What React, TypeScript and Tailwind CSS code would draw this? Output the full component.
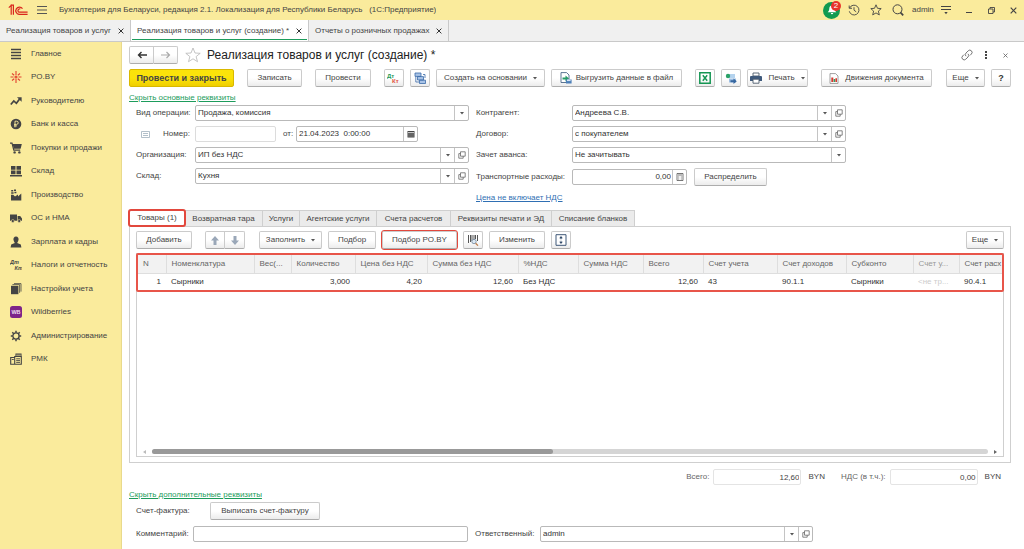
import type { ReactNode } from "react";
import clsx from "clsx";

const sections: { title: string; icon: ReactNode }[] = [
  { title: "Главное", icon: <path d="M1 1.5h10M1 4.5h10M1 7.5h10M1 10.5h10" stroke="currentColor" strokeWidth="1.6" /> },
  {
    title: "PO.BY",
    icon: (
      <g stroke="#e2402f" strokeWidth="1.1" fill="none">
        <path d="M6 0v4M6 8v4M0.5 6h3M8.5 6h3M2 2.5l2.2 1.7M10 2.5L7.8 4.2M2 9.5l2.2-1.7M10 9.5L7.8 7.8" />
        <circle cx="6" cy="6" r="1" />
      </g>
    ),
  },
  {
    title: "Руководителю",
    icon: (
      <>
        <path d="M0.8 9.5l3-3.6 2.6 2.4L9.6 4" fill="none" stroke="currentColor" strokeWidth="1.7" />
        <path d="M7 2.2h4.6v4.6z" fill="currentColor" />
      </>
    ),
  },
  {
    title: "Банк и касса",
    icon: (
      <>
        <circle cx="6" cy="6" r="5.3" fill="currentColor" />
        <path d="M5 9.3V3.2h1.6a1.5 1.5 0 010 3.2H4M4 7.9h3" fill="none" stroke="#faeb9c" strokeWidth="0.9" />
      </>
    ),
  },
  {
    title: "Покупки и продажи",
    icon: (
      <>
        <path d="M0 1.2h2l1.8 7h6.4" fill="none" stroke="currentColor" strokeWidth="1.2" />
        <path d="M2.6 2h9.2l-1.2 4.8H3.8z" fill="currentColor" />
        <circle cx="4.6" cy="10.4" r="1.2" fill="currentColor" />
        <circle cx="9.4" cy="10.4" r="1.2" fill="currentColor" />
      </>
    ),
  },
  { title: "Склад", icon: <path d="M1 1h4.5v3.8H1zM6.5 1H11v3.8H6.5zM1 5.6h4.5v3.6H1zM6.5 5.6H11v3.6H6.5zM0 10h12v1.4H0z" fill="currentColor" /> },
  { title: "Производство", icon: <path d="M1 11.5V5.8h2.2L5 7.4l3-2v2l3.3-3v7.1zM1.2 1h2v1.4h-2zM4 0.6h2V2H4zM1.2 3.2h2.4v1.6H1.2zM4.4 2.8h2v1.4h-2z" fill="currentColor" /> },
  {
    title: "ОС и НМА",
    icon: (
      <>
        <path d="M0 2.4h7v6.4H0zM7.6 4h2.6L12 6.4v2.4H7.6z" fill="currentColor" />
        <circle cx="2.8" cy="9" r="1.5" fill="currentColor" stroke="#faeb9c" strokeWidth="0.5" />
        <circle cx="9.2" cy="9" r="1.5" fill="currentColor" stroke="#faeb9c" strokeWidth="0.5" />
      </>
    ),
  },
  { title: "Зарплата и кадры", icon: <path d="M6 0.6a2.6 2.6 0 012.4 3.6C8 5.6 7.4 6.3 7.2 7l3.6 1.6.6 2.8H.6l.6-2.8L4.8 7c-.2-.7-.8-1.4-1.2-2.8A2.6 2.6 0 016 .6z" fill="currentColor" /> },
  {
    title: "Налоги и отчетность",
    icon: (
      <g fill="currentColor" fontSize="5.5" fontWeight="bold" fontStyle="italic">
        <text x="0" y="5">Дт</text>
        <text x="4.5" y="11">Кт</text>
      </g>
    ),
  },
  {
    title: "Настройки учета",
    icon: (
      <>
        <path d="M1 2.8h7.4v8.4H1z" fill="currentColor" />
        <path d="M2.4 1.6h7.2v8.2M4 0.6h7v8" fill="none" stroke="currentColor" strokeWidth="0.8" />
      </>
    ),
  },
  {
    title: "Wildberries",
    icon: (
      <>
        <rect width="12" height="12" rx="2.5" fill="#7d2489" />
        <text x="6" y="7.8" fontSize="5.5" fontWeight="bold" fill="#eddcf0" textAnchor="middle">WB</text>
      </>
    ),
  },
  {
    title: "Администрирование",
    icon: (
      <g stroke="currentColor" fill="none">
        <circle cx="6" cy="6" r="3.1" strokeWidth="1.3" />
        <path d="M6 0.8v2M6 9.2v2M0.8 6h2M9.2 6h2M2.3 2.3l1.4 1.4M8.3 8.3l1.4 1.4M2.3 9.7l1.4-1.4M8.3 3.7l1.4-1.4" strokeWidth="1.5" />
      </g>
    ),
  },
  {
    title: "РМК",
    icon: (
      <g stroke="currentColor" fill="none">
        <path d="M0.7 4.5h4v6.8h-4zM4.7 3.5h6.6v7.8H4.7zM6 3.5V1h5v2.5" strokeWidth="1.1" />
        <path d="M6.2 5.8h3.8M6.2 7.6h3.8M6.2 9.4h3.8M1.8 6.5h2M7 2h3" strokeWidth="0.9" />
      </g>
    ),
  },
];

const docTabs = [
  { title: "Реализация товаров и услуг", width: "w-[131px]", active: false },
  { title: "Реализация товаров и услуг (создание) *", width: "w-[178px]", active: true },
  { title: "Отчеты о розничных продажах", width: "w-[140px]", active: false },
];

const pages = [
  { title: "Товары (1)", width: "w-[56px]" },
  { title: "Возвратная тара", width: "w-[78px]" },
  { title: "Услуги", width: "w-[37px]" },
  { title: "Агентские услуги", width: "w-[77px]" },
  { title: "Счета расчетов", width: "w-[74px]" },
  { title: "Реквизиты печати и ЭД", width: "w-[101px]" },
  { title: "Списание бланков", width: "w-[83px]" },
];

const columns = [
  { title: "N", value: "1", width: "w-[28px]", num: true },
  { title: "Номенклатура", value: "Сырники", width: "w-[88px]" },
  { title: "Вес(...", value: "", width: "w-[37px]" },
  { title: "Количество", value: "3,000", width: "w-[64px]", num: true },
  { title: "Цена без НДС", value: "4,20", width: "w-[72px]", num: true },
  { title: "Сумма без НДС", value: "12,60", width: "w-[91px]", num: true },
  { title: "%НДС", value: "Без НДС", width: "w-[60px]" },
  { title: "Сумма НДС", value: "", width: "w-[65px]" },
  { title: "Всего", value: "12,60", width: "w-[60px]", num: true },
  { title: "Счет учета", value: "43", width: "w-[74px]" },
  { title: "Счет доходов", value: "90.1.1", width: "w-[69px]" },
  { title: "Субконто", value: "Сырники", width: "w-[67px]" },
  { title: "Счет у...", value: "<не тр...", width: "w-[46px]", muted: true },
  { title: "Счет расх", value: "90.4.1", width: "" },
];

function Button({ children, className, label }: { children: ReactNode; className?: string; label?: string }) {
  return (
    <button
      type="button"
      aria-label={label}
      className={clsx(
        "flex h-[18px] shrink-0 items-center justify-center rounded-xs border border-[#cbcbcb] border-b-[#adadad] bg-linear-to-b from-white from-50% to-[#ececec] whitespace-nowrap",
        className,
      )}
    >
      {children}
    </button>
  );
}

function Caret() {
  return (
    <svg viewBox="0 0 4 3" className="h-[3px] w-1" aria-hidden="true">
      <path d="M0 0h4L2 2.6z" fill="#555" />
    </svg>
  );
}

function OpenIcon() {
  return (
    <svg viewBox="0 0 8 8" className="size-2" fill="none" stroke="#666" strokeWidth="0.8" aria-hidden="true">
      <path d="M2.5 0.8h4.7v4.4H2.5zM2.5 2.6H0.8v4.6h4.4V5.2" />
    </svg>
  );
}

function CrossIcon({ className }: { className?: string }) {
  return (
    <svg viewBox="0 0 6 6" className={clsx("size-1.5", className)} stroke="currentColor" aria-hidden="true">
      <path d="M0.6 0.6l4.8 4.8M5.4 0.6L0.6 5.4" />
    </svg>
  );
}

function SelectField({ id, value, open }: { id: string; value: string; open?: boolean }) {
  return (
    <div className="flex h-4 min-w-0 flex-1 rounded-xs border border-[#b9b9b9] bg-white text-[#333]">
      <div className="relative min-w-0 flex-1">
        <select id={id} className="block h-full w-full appearance-none bg-transparent pl-0.5 outline-none">
          <option>{value}</option>
        </select>
        <span className="pointer-events-none absolute inset-y-0 right-0 flex w-3.5 items-center justify-center border-l border-[#c4c4c4]">
          <Caret />
        </span>
      </div>
      {open && (
        <button type="button" aria-label="Открыть" className="flex w-3.5 items-center justify-center border-l border-[#c4c4c4]">
          <OpenIcon />
        </button>
      )}
    </div>
  );
}

function Total({ id, label, value }: { id: string; label: string; value: string }) {
  return (
    <div className="flex items-center">
      <label htmlFor={id} className="mr-1 text-[#666]">{label}</label>
      <input id={id} readOnly defaultValue={value} className="mr-[7px] h-4 w-[88px] rounded-xs border border-[#e4e4e4] px-px text-right text-[#444] outline-none" />
      <span>BYN</span>
    </div>
  );
}

function Header() {
  return (
    <header className="flex h-5 items-center bg-[#faeb9c] pr-[7px] pl-2">
      <svg viewBox="0 0 20 12" className="h-3 w-5" fill="none" stroke="#d9261c" strokeWidth="1.2" role="img" aria-label="1С">
        <path d="M0.8 3.6L3.2 1.4v9.4M2.6 1.2h2.8v9.6" />
        <path d="M14.5 4.6A3.7 3.7 0 1011 10.4h8.6" />
        <path d="M12.4 5A1.7 1.7 0 1011 8.2h8.6" />
      </svg>
      <button type="button" aria-label="Меню" className="ml-[9px]">
        <svg viewBox="0 0 10 8" className="h-2 w-2.5" stroke="#555">
          <path d="M0 0.5h10M0 4h10M0 7.5h10" />
        </svg>
      </button>
      <p className="ml-3 truncate whitespace-pre">
        {"Бухгалтерия для Беларуси, редакция 2.1. Локализация для Республики Беларусь   (1С:Предприятие)"}
      </p>
      <div className="ml-auto flex shrink-0 items-center text-[#444]">
        <button type="button" aria-label="Уведомления" className="relative flex size-[17px] items-center justify-center rounded-full bg-[#119a50]">
          <svg viewBox="0 0 10 10" className="size-2.5" fill="#fff">
            <path d="M5 0.5c2 0 2.6 1.6 2.7 3.2.1 1.6.6 2.4 1.6 3.5H.7C1.7 6.1 2.2 5.3 2.3 3.7 2.4 2.1 3 .5 5 .5zM3.8 8h2.4a1.2 1.2 0 01-2.4 0z" />
          </svg>
          <span className="absolute -top-px -right-px flex size-2.5 items-center justify-center rounded-full bg-[#e8352b] text-white">2</span>
        </button>
        <button type="button" aria-label="История" className="ml-2">
          <svg viewBox="0 0 12 12" className="size-3" fill="none" stroke="currentColor" strokeWidth="0.9">
            <path d="M1.6 4A4.9 4.9 0 111.3 7.3M1.2 1.5v2.8H4M6 3.2v3l2.2 1.6" />
          </svg>
        </button>
        <button type="button" aria-label="Избранное" className="ml-2.5">
          <svg viewBox="0 0 12 12" className="size-3" fill="none" stroke="currentColor" strokeWidth="0.9">
            <path d="M6 0.8l1.5 3.5 3.7.3-2.8 2.5.9 3.8L6 8.9l-3.3 2 .9-3.8L.8 4.6l3.7-.3z" />
          </svg>
        </button>
        <button type="button" aria-label="Поиск" className="ml-2.5">
          <svg viewBox="0 0 12 12" className="size-3" fill="none" stroke="currentColor">
            <circle cx="5.5" cy="5.3" r="4.5" />
            <path d="M8.4 8.4l2.8 3" strokeWidth="1.7" />
          </svg>
        </button>
        <span className="ml-2 w-[21px]">admin</span>
        <button type="button" aria-label="Настройки" className="ml-2">
          <svg viewBox="0 0 10 10" className="size-2.5" stroke="currentColor" fill="currentColor">
            <path d="M0 1.5h10M0 4.5h10" fill="none" />
            <path d="M3.3 7h3.4L5 9.2z" stroke="none" />
          </svg>
        </button>
        <button type="button" aria-label="Свернуть" className="ml-[15px]">
          <svg viewBox="0 0 6 8" className="h-2 w-1.5" stroke="currentColor"><path d="M0 6.5h6" /></svg>
        </button>
        <button type="button" aria-label="Развернуть" className="ml-4">
          <svg viewBox="0 0 7 7" className="size-[7px]" fill="none" stroke="currentColor" strokeWidth="0.9">
            <path d="M0.5 2h4.5v4.5H.5zM2 2V.5h4.5V5H5" />
          </svg>
        </button>
        <button type="button" aria-label="Закрыть" className="ml-[15px]">
          <CrossIcon className="size-[7px]" />
        </button>
      </div>
    </header>
  );
}

function DocTabs() {
  return (
    <div className="flex h-[22px] border-b border-[#c9c9c9] bg-[#f0f0f0]">
      {docTabs.map((tab) => (
        <div
          key={tab.title}
          className={clsx(
            "relative flex shrink-0 items-center justify-between border-r border-[#c9c9c9] px-1.5",
            tab.width,
            tab.active && "bg-white",
          )}
        >
          <button type="button" className="whitespace-nowrap">{tab.title}</button>
          <button type="button" aria-label="Закрыть вкладку" className="text-[#333]">
            <CrossIcon />
          </button>
          {tab.active && <span className="absolute inset-x-px bottom-px h-px bg-[#1d9c5c]" />}
        </div>
      ))}
    </div>
  );
}

function Sidebar() {
  return (
    <nav className="w-[122px] shrink-0 border-r border-[#e9da8c] bg-[#faeb9c]">
      <ul className="flex h-[329px] flex-col">
        {sections.map((section) => (
          <li key={section.title} className="flex-1">
            <a href="#" className="flex h-full items-center gap-[9px] pl-2.5 whitespace-nowrap">
              <svg viewBox="0 0 12 12" className="size-3 shrink-0 text-[#444]" aria-hidden="true">{section.icon}</svg>
              {section.title}
            </a>
          </li>
        ))}
      </ul>
    </nav>
  );
}

function TitleBar() {
  return (
    <div className="flex h-[26px] items-center">
      <div className="flex">
        <Button label="Назад" className="w-[25px] rounded-r-none">
          <svg viewBox="0 0 10 8" className="h-2 w-2.5" fill="none" stroke="#333" strokeWidth="1.4"><path d="M10 4H1.5M4.5 1l-3 3 3 3" /></svg>
        </Button>
        <Button label="Вперед" className="w-6 rounded-l-none border-l-0">
          <svg viewBox="0 0 10 8" className="h-2 w-2.5" fill="none" stroke="#aaa" strokeWidth="1.2"><path d="M0 4h8.5M5.5 1l3 3-3 3" /></svg>
        </Button>
      </div>
      <button type="button" aria-label="В избранное" className="ml-[7px]">
        <svg viewBox="0 0 16 16" className="size-4" fill="none" stroke="#b5b5b5" strokeWidth="0.8">
          <path d="M8 1l2 5 5.2.3-4.1 3.3 1.4 5.1L8 11.8l-4.500 2.9 1.400-5.1L.8 6.3 6 6z" />
        </svg>
      </button>
      <h1 className="ml-1.5 text-xs whitespace-nowrap text-[#222]">Реализация товаров и услуг (создание) *</h1>
      <div className="ml-auto flex items-center gap-3 pr-[3px] text-[#666]">
        <button type="button" aria-label="Ссылка">
          <svg viewBox="0 0 12 12" className="size-3" fill="none" stroke="currentColor" strokeWidth="0.9">
            <path d="M5 7.2a2.3 2.3 0 010-3.2l2.2-2.2a2.2 2.2 0 013.2 3.2L9 6.4M7 4.8A2.3 2.3 0 017 8L4.8 10.2A2.2 2.2 0 011.6 7L3 5.6" />
          </svg>
        </button>
        <button type="button" aria-label="Действия">
          <svg viewBox="0 0 2 8" className="h-2 w-0.5" fill="#444"><path d="M0 0h2v2H0zM0 3h2v2H0zM0 6h2v2H0z" /></svg>
        </button>
        <button type="button" aria-label="Закрыть" className="ml-1">
          <CrossIcon className="size-[5px]" />
        </button>
      </div>
    </div>
  );
}

function CommandBar() {
  return (
    <div className="flex items-center gap-1.5 pt-px">
      <Button className="mr-[7px] w-[105px] border-[#d9b800]! bg-linear-to-b from-[#fbe30a]! to-[#efce00]! text-[9px] font-bold text-[#444]">Провести и закрыть</Button>
      <Button className="mr-[7px] w-[55px]">Записать</Button>
      <Button className="mr-[7px] w-14">Провести</Button>
      <Button label="Дт Кт" className="w-5">
        <svg viewBox="0 0 14 12" className="h-3 w-3.5" fontSize="6" fontWeight="bold" aria-hidden="true">
          <text x="0" y="5.5" fill="#1c9a58">Дт</text>
          <text x="5" y="11" fill="#e0513f">Кт</text>
        </svg>
      </Button>
      <Button label="Структура подчиненности" className="w-5">
        <svg viewBox="0 0 12 12" className="size-3" fill="#a9c3e6" stroke="#3b6ba8" strokeWidth="0.8" aria-hidden="true">
          <path d="M1.8 4.5v5.5h3.500M9 2.5h2v3.500" fill="none" />
          <path d="M1 1h6v3.400H1zM3.500 4.600h6V8h-6zM5.500 8.200h6v3.300h-6z" />
        </svg>
      </Button>
      <Button className="w-[109px] gap-1.5">
        Создать на основании <Caret />
      </Button>
      <Button className="mr-[7px] w-[131px] gap-1">
        <svg viewBox="0 0 12 12" className="size-3" aria-hidden="true">
          <path d="M1 0.6h5.6L9 3v7.5H1z" fill="#fff" stroke="#4a6688" strokeWidth="0.9" />
          <path d="M2.5 5.5h3V3.5L9 6.5l-3.500 3v-2h-3z" fill="#279b68" />
          <path d="M6 7.5h5.600v4H6z" fill="#4c7fb8" />
          <path d="M7 7.5h3.600v1.600H7z" fill="#d6e3f2" />
        </svg>
        Выгрузить данные в файл
      </Button>
      <Button label="Excel" className="w-5">
        <svg viewBox="0 0 12 12" className="size-3" fill="none" stroke="#159653" aria-hidden="true">
          <path d="M0.8 0.8h10.400v10.400H.8z" strokeWidth="1.5" />
          <path d="M3.8 3.3l4.400 5.400M8.2 3.3L3.8 8.7" strokeWidth="1.5" />
        </svg>
      </Button>
      <Button label="Отправить" className="w-5">
        <svg viewBox="0 0 12 12" className="size-3" aria-hidden="true">
          <path d="M2 2h8v4H2z" fill="#b5d3ee" />
          <circle cx="3" cy="4" r="2.2" fill="#2aa167" />
          <path d="M4 6.5h7v4H4z" fill="#9dbfe3" />
          <path d="M5.5 8.2h3V6.5l3.300 2.700-3.300 2.700v-1.700h-3z" fill="#35669f" />
        </svg>
      </Button>
      <Button className="mr-[7px] w-[61px] gap-1.5">
        <svg viewBox="0 0 12 12" className="size-3" aria-hidden="true">
          <path d="M3 1h6v3H3z" fill="#fff" stroke="#4d5b6c" strokeWidth="0.9" />
          <path d="M1 4h10a1 1 0 011 1v4H0V5a1 1 0 011-1z" fill="#3f5a7c" />
          <path d="M3 7.2h6v4H3z" fill="#fff" stroke="#4d5b6c" strokeWidth="0.9" />
        </svg>
        Печать <Caret />
      </Button>
      <Button className="w-[111px] gap-1.5">
        <svg viewBox="0 0 10 11" className="h-[11px] w-2.5" aria-hidden="true">
          <path d="M1 0.6h5.500L9 3v7.400H1z" fill="#fff" stroke="#888" strokeWidth="0.8" />
          <path d="M2.3 4.5h2v4.500h-2z" fill="#d53a30" />
          <path d="M4.6 6h1.600v3H4.600z" fill="#32a060" />
          <path d="M6.4 5.2H8V9H6.400z" fill="#d53a30" />
        </svg>
        Движения документа
      </Button>
      <Button className="ml-auto w-[39px] gap-1.5">
        Еще <Caret />
      </Button>
      <Button className="w-5 text-[9px] font-bold text-[#333]" label="Справка">?</Button>
    </div>
  );
}

function MainFields() {
  return (
    <div className="mt-px grid max-w-[717px] grid-cols-[333fr_370fr] gap-x-[7px] pl-[7px]">
      <div className="flex flex-col gap-[5px]">
        <div className="flex items-center">
          <label htmlFor="operation" className="w-[59px] shrink-0 whitespace-nowrap">Вид операции:</label>
          <SelectField id="operation" value="Продажа, комиссия" />
        </div>
        <div className="flex items-center">
          <svg viewBox="0 0 9 7" className="ml-[5px] h-[7px] w-[9px] shrink-0" fill="none" stroke="#9fb0bd" strokeWidth="0.8" aria-hidden="true">
            <path d="M0.5 0.5h8v6h-8zM2 2.5h5M2 4.5h5" />
          </svg>
          <label htmlFor="number" className="ml-[13px] w-8 shrink-0">Номер:</label>
          <input id="number" className="h-4 w-[81px] rounded-xs border border-[#dcdcdc] px-px outline-none" />
          <label htmlFor="date" className="ml-[7px] w-[13px] shrink-0">от:</label>
          <div className="flex h-4 w-[122px] rounded-xs border border-[#b9b9b9] text-[#333]">
            <input id="date" defaultValue="21.04.2023  0:00:00" className="min-w-0 flex-1 pl-0.5 outline-none" />
            <button type="button" aria-label="Выбрать дату" className="flex w-3.5 items-center justify-center border-l border-[#c4c4c4]">
              <svg viewBox="0 0 8 8" className="size-2" aria-hidden="true">
                <path d="M0.5 1h7v6.500h-7z" fill="#444" />
                <path d="M1.5 4h1M3.5 4h1M5.5 4h1M1.5 6h1M3.5 6h1M5.5 6h1M1 2.5h6" stroke="#fff" strokeWidth="0.7" />
              </svg>
            </button>
          </div>
        </div>
        <div className="flex items-center">
          <label htmlFor="organization" className="w-[59px] shrink-0">Организация:</label>
          <SelectField id="organization" value="ИП без НДС" open />
        </div>
        <div className="flex items-center">
          <label htmlFor="warehouse" className="w-[59px] shrink-0">Склад:</label>
          <SelectField id="warehouse" value="Кухня" open />
        </div>
      </div>
      <div className="flex flex-col gap-[5px]">
        <div className="flex items-center">
          <label htmlFor="partner" className="w-24 shrink-0">Контрагент:</label>
          <SelectField id="partner" value="Андреева С.В." open />
        </div>
        <div className="flex items-center">
          <label htmlFor="contract" className="w-24 shrink-0">Договор:</label>
          <SelectField id="contract" value="с покупателем" open />
        </div>
        <div className="flex items-center">
          <label htmlFor="advance" className="w-24 shrink-0">Зачет аванса:</label>
          <SelectField id="advance" value="Не зачитывать" />
        </div>
        <div className="flex items-center">
          <label htmlFor="transport" className="w-24 shrink-0 whitespace-nowrap">Транспортные расходы:</label>
          <div className="flex h-4 w-[115px] rounded-xs border border-[#b9b9b9] text-[#333]">
            <input id="transport" defaultValue="0,00" className="min-w-0 flex-1 px-px text-right outline-none" />
            <button type="button" aria-label="Калькулятор" className="flex w-3.5 items-center justify-center border-l border-[#c4c4c4]">
              <svg viewBox="0 0 8 8" className="size-2" fill="none" stroke="#555" strokeWidth="0.8" aria-hidden="true">
                <path d="M1 0.5h6v7H1zM2 2h4M2.2 4h1M4.8 4h1M2.2 6h1M4.8 6h1" />
              </svg>
            </button>
          </div>
          <Button className="ml-[7px] w-[73px]">Распределить</Button>
        </div>
        <a href="#" className="mt-px self-start text-[#2f6fb3] underline">Цена не включает НДС</a>
      </div>
    </div>
  );
}

function ItemsBar() {
  return (
    <div className="flex gap-1.5">
      <Button className="mr-[7px] w-14">Добавить</Button>
      <div className="mr-2 flex">
        <Button label="Вверх" className="w-5 rounded-r-none">
          <svg viewBox="0 0 8 9" className="h-[9px] w-2" fill="#9aa7b8"><path d="M4 0l4 4.500H5.500V9h-3V4.500H0z" /></svg>
        </Button>
        <Button label="Вниз" className="w-5 rounded-l-none border-l-0">
          <svg viewBox="0 0 8 9" className="h-[9px] w-2" fill="#9aa7b8"><path d="M4 9l4-4.500H5.500V0h-3v4.500H0z" /></svg>
        </Button>
      </div>
      <Button className="w-[63px] gap-1.5">
        Заполнить <Caret />
      </Button>
      <Button className="w-12">Подбор</Button>
      <Button className="w-[75px] outline outline-[#e2483d]">Подбор PO.BY</Button>
      <Button label="Поиск по штрихкоду" className="w-5">
        <svg viewBox="0 0 12 12" className="size-3" fill="none" aria-hidden="true">
          <path d="M1.5 1v8M3.5 1v7M5 1v6M7 1v5M8.5 1v4M10.5 1v6" stroke="#555" />
          <circle cx="7" cy="7.5" r="2.2" fill="#dce8f3" stroke="#71869b" strokeWidth="0.8" />
          <path d="M8.6 9.2l2.400 2.400" stroke="#bd7d4b" strokeWidth="1.3" />
        </svg>
      </Button>
      <Button className="w-14">Изменить</Button>
      <Button label="Высота строк" className="w-5">
        <svg viewBox="0 0 12 12" className="size-3" aria-hidden="true">
          <path d="M1 0.7h10v10.600H1z" fill="#fff" stroke="#3f5878" />
          <path d="M6 2l1.800 2.200H4.200zM6 10l1.800-2.200H4.200zM5.5 4h1v1.200h-1zM5.5 6.8h1V8h-1z" fill="#2f4868" />
        </svg>
      </Button>
      <Button className="ml-auto w-[38px] gap-1.5">
        Еще <Caret />
      </Button>
    </div>
  );
}

function ItemsTable() {
  return (
    <div className="mt-1 flex h-[204px] flex-col border border-[#cfcfcf]">
      <div className="-mx-px -mt-px overflow-hidden rounded-xs border-2 border-[#e8554a]">
        <table className="w-full table-fixed border-collapse">
          <thead>
            <tr className="h-[18px] bg-[#f2f2f2]">
              {columns.map((col) => (
                <th
                  key={col.title}
                  className={clsx(
                    "overflow-hidden border-r border-b border-[#dedede] p-0 pl-[5px] text-left font-normal whitespace-nowrap last:border-r-0",
                    col.width,
                    col.muted ? "text-[#999]" : "text-[#666]",
                  )}
                >
                  {col.title}
                </th>
              ))}
            </tr>
          </thead>
          <tbody>
            <tr className="h-[17px]">
              {columns.map((col) => (
                <td
                  key={col.title}
                  className={clsx(
                    "overflow-hidden p-0 px-[5px] whitespace-nowrap",
                    col.num && "text-right",
                    col.muted ? "text-[#ccc]" : "text-[#333]",
                  )}
                >
                  {col.value}
                </td>
              ))}
            </tr>
          </tbody>
        </table>
      </div>
      <div className="mt-auto flex items-center gap-1.5 px-1.5 pb-0.5">
        <svg viewBox="0 0 3 4" className="h-1 w-[3px]" fill="#bbb"><path d="M3 0v4L0 2z" /></svg>
        <div className="h-[5px] flex-1 rounded-full bg-[#d5d5d5]">
          <div className="h-full w-[48%] rounded-full bg-[#999]" />
        </div>
        <svg viewBox="0 0 3 4" className="h-1 w-[3px]" fill="#666"><path d="M0 0v4l3-2z" /></svg>
      </div>
    </div>
  );
}

export default function App() {
  return (
    <div className="flex min-h-screen flex-col bg-white font-['Liberation_Sans',Arial,sans-serif] text-[8px] leading-3 text-[#444]">
      <Header />
      <DocTabs />
      <div className="flex flex-1">
        <Sidebar />
        <main className="min-w-0 flex-1 pr-[13px] pl-[7px]">
          <TitleBar />
          <CommandBar />
          <a href="#" className="mt-[5px] block w-fit text-[#1d9c5c] underline">Скрыть основные реквизиты</a>
          <MainFields />
          <div role="tablist" className="mt-1.5 flex h-4">
            {pages.map((page, i) => (
              <button
                key={page.title}
                type="button"
                role="tab"
                aria-selected={i === 0}
                className={clsx(
                  "shrink-0 whitespace-nowrap",
                  page.width,
                  i === 0
                    ? "z-10 rounded-xs bg-white outline-2 -outline-offset-1 outline-[#e2483d]"
                    : "border-t border-r border-[#cfcfcf] bg-[#ebebeb]",
                )}
              >
                {page.title}
              </button>
            ))}
          </div>
          <section className="border border-[#cfcfcf] px-1.5 pt-1 pb-[5px]">
            <ItemsBar />
            <ItemsTable />
          </section>
          <div className="mt-1.5 flex justify-end gap-4 pr-2.5">
            <Total id="total" label="Всего:" value="12,60" />
            <Total id="vat" label="НДС (в т.ч.):" value="0,00" />
          </div>
          <a href="#" className="mt-1 block w-fit text-[#1d9c5c] underline">Скрыть дополнительные реквизиты</a>
          <div className="mt-px flex items-center pl-[7px]">
            <span className="w-[74px]">Счет-фактура:</span>
            <Button className="w-[110px]">Выписать счет-фактуру</Button>
          </div>
          <div className="mt-1.5 flex max-w-[684px] items-center pl-[7px]">
            <label htmlFor="comment" className="w-[57px] shrink-0">Комментарий:</label>
            <input id="comment" className="h-4 min-w-0 flex-1 rounded-xs border border-[#b9b9b9] px-px outline-none" />
            <label htmlFor="responsible" className="ml-[7px] w-[65px] shrink-0">Ответственный:</label>
            <SelectField id="responsible" value="admin" open />
          </div>
        </main>
      </div>
    </div>
  );
}
